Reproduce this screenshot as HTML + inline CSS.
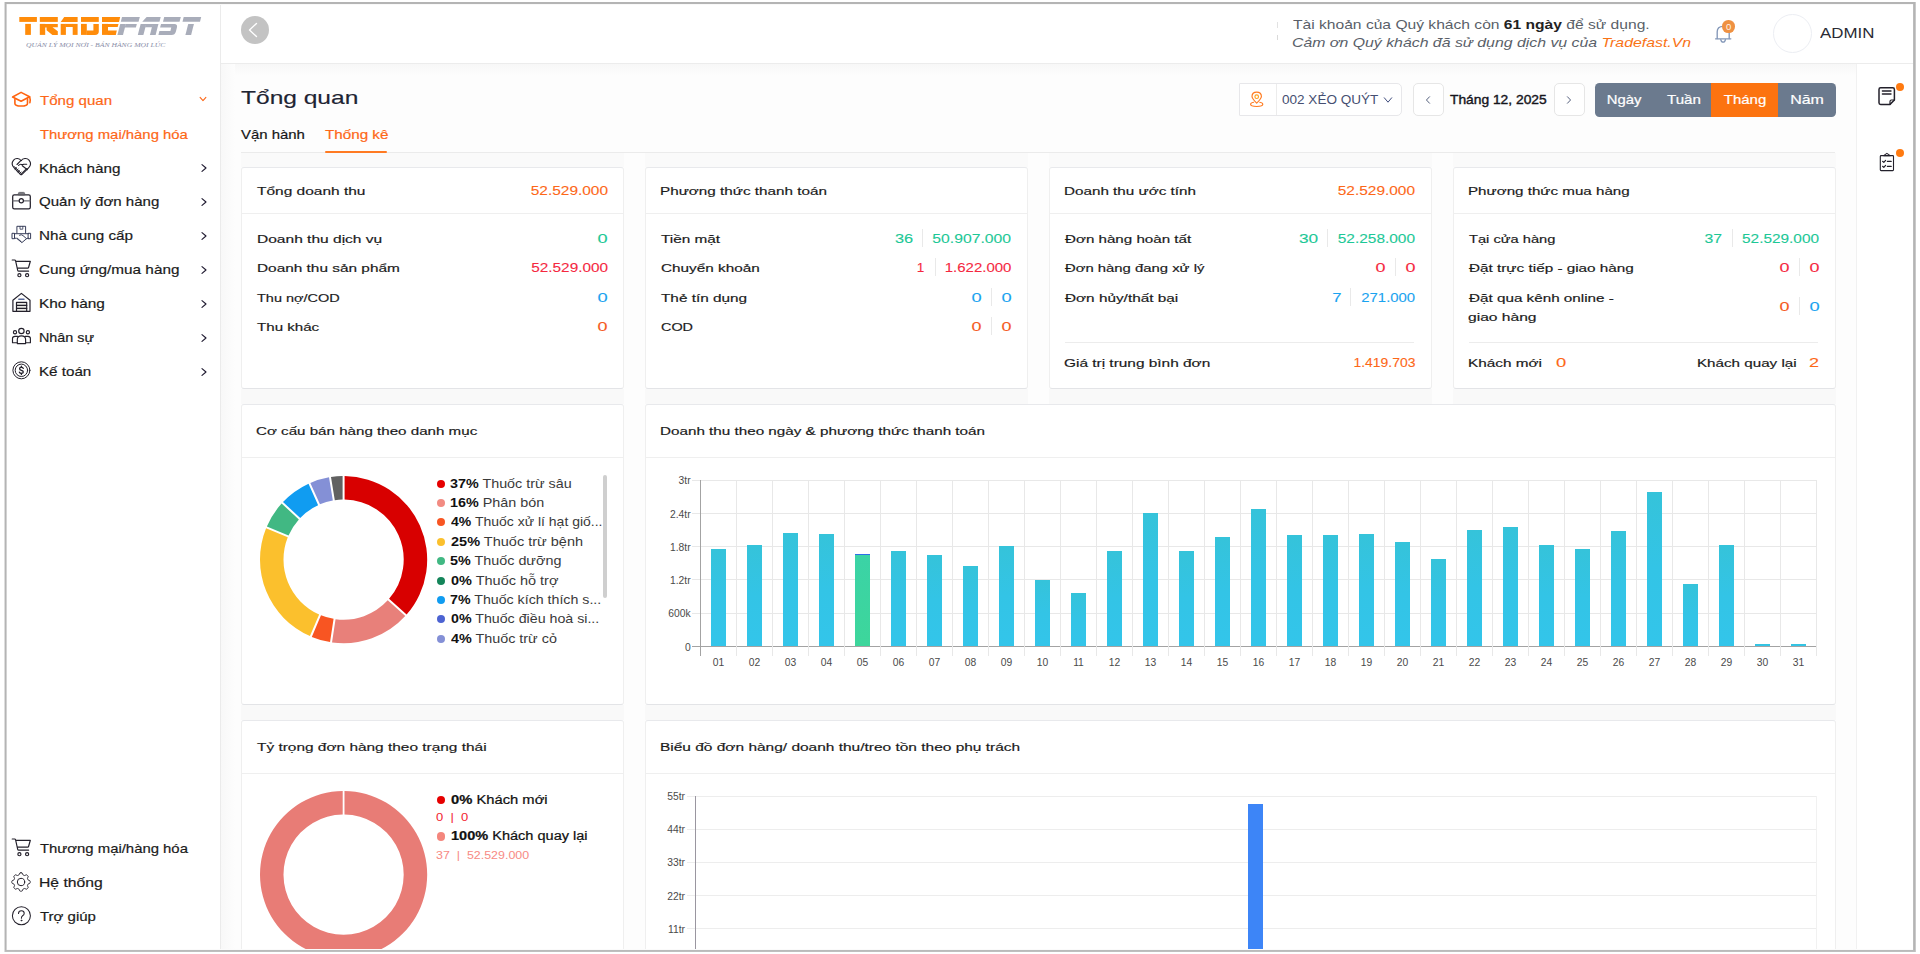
<!DOCTYPE html>
<html lang="vi"><head><meta charset="utf-8"><title>Tổng quan</title>
<style>
html,body{margin:0;padding:0;background:#fff;}
body{width:1920px;height:954px;overflow:hidden;position:relative;font-family:"Liberation Sans",sans-serif;}
#app{position:absolute;left:0;top:0;width:1920px;height:954px;overflow:hidden;background:#fff;}
#app b{font-weight:700}
.m{position:absolute;background:#fff}
</style></head><body><div id="app">

<div style="position:absolute;left:221px;top:64px;width:1635px;height:890px;background:#fdfdfd"></div>
<div style="position:absolute;left:221px;top:64px;width:1635px;height:12px;background:linear-gradient(#f7f7f7,#fdfdfd)"></div>
<div style="position:absolute;left:221px;top:64px;width:14px;height:890px;background:linear-gradient(90deg,#f8f8f8,#fdfdfd)"></div>
<div style="position:absolute;left:241px;top:153px;width:383px;height:14px;background:#fafafa"></div>
<div style="position:absolute;left:241px;top:389px;width:383px;height:15px;background:#f9f9f9"></div>
<div style="position:absolute;left:645px;top:153px;width:383px;height:14px;background:#fafafa"></div>
<div style="position:absolute;left:645px;top:389px;width:383px;height:15px;background:#f9f9f9"></div>
<div style="position:absolute;left:1049px;top:153px;width:383px;height:14px;background:#fafafa"></div>
<div style="position:absolute;left:1049px;top:389px;width:383px;height:15px;background:#f9f9f9"></div>
<div style="position:absolute;left:1453px;top:153px;width:383px;height:14px;background:#fafafa"></div>
<div style="position:absolute;left:1453px;top:389px;width:383px;height:15px;background:#f9f9f9"></div>
<div style="position:absolute;left:241px;top:705px;width:383px;height:15px;background:#f9f9f9"></div>
<div style="position:absolute;left:645px;top:705px;width:1191px;height:15px;background:#f9f9f9"></div>
<div style="position:absolute;left:221px;top:63px;width:1692px;height:1px;background:#ececec"></div>
<div style="position:absolute;left:220px;top:4px;width:1px;height:946px;background:#ebebeb"></div>
<div style="position:absolute;left:1856px;top:64px;width:57px;height:886px;background:#fff"></div>
<div style="position:absolute;left:1856px;top:64px;width:1px;height:886px;background:#f1f1f1"></div>
<svg style="position:absolute;left:0;top:0" width="220" height="60" viewBox="0 0 220 60">
<g fill="#ff8c0a">
 <rect x="19.3" y="17" width="17.6" height="4.9"/><rect x="25.2" y="23.9" width="5.7" height="11"/>
 <rect x="39.8" y="17" width="18" height="4.9"/><rect x="39.8" y="23.9" width="5.4" height="11"/>
 <path d="M45 23.9H57.8V27.2H52.5L57.8 31.2V34.9H52.4L46.6 30.2V27.4H45Z"/>
 <path d="M64.2 17H77.6V21.9H60.7Z"/><rect x="60.7" y="23.9" width="5.2" height="11"/><rect x="72.7" y="23.9" width="4.9" height="11"/><rect x="65.5" y="23.9" width="7.5" height="3.1"/>
 <rect x="81" y="17" width="17.8" height="4.9"/><rect x="81" y="23.9" width="5.8" height="11"/>
 <path d="M93.4 23.9H98.8V31.5Q98.8 34.9 95 34.9H86.5V30.4H93.4Z"/>
 <path d="M102 17H120.2L119 21.9H102Z"/><rect x="102" y="23.9" width="6" height="11"/>
 <path d="M107.8 23.9H118.5L117.7 27H107.8Z"/><path d="M107.8 30.6H116.8L115.8 34.9H107.8Z"/>
</g>
<g fill="#a9adba" transform="translate(0,34.9) skewX(-14.4) translate(0,-34.9)">
 <rect x="117.4" y="17" width="17.8" height="4.7"/><rect x="117.4" y="23.9" width="5.6" height="11"/><rect x="122.8" y="23.9" width="11.2" height="3.6"/>
 <path d="M142 17H156.1V21.7H138.9Z"/><rect x="137.8" y="23.9" width="5.6" height="11"/><rect x="149.9" y="23.9" width="5.7" height="11"/><rect x="143" y="23.9" width="7.4" height="3.4"/>
 <rect x="159.6" y="17" width="16.6" height="4.7"/>
 <path d="M158.2 23.9H171.5Q175 23.9 175 27.4V31.4Q175 34.9 171.5 34.9H158.4V31H169.4V27.6H158.2Z"/>
 <rect x="179.1" y="17" width="17.5" height="4.7"/><rect x="185.4" y="23.9" width="5.7" height="11"/>
</g>
</svg>
<svg style="position:absolute;left:195.4px;top:91.3px" width="16" height="16" viewBox="-8 -8 16 16"><path d="M-2.90 -1.70L0.00 1.70L2.90 -1.70" fill="none" stroke="#fd6717" stroke-width="1.05" stroke-linecap="round" stroke-linejoin="round"/></svg>
<svg style="position:absolute;left:195.65px;top:160.39999999999998px" width="16" height="16" viewBox="-8 -8 16 16"><path d="M-2.00 -3.40L2.00 0.00L-2.00 3.40" fill="none" stroke="#1f1a30" stroke-width="1.15" stroke-linecap="round" stroke-linejoin="round"/></svg>
<svg style="position:absolute;left:195.65px;top:194.29999999999998px" width="16" height="16" viewBox="-8 -8 16 16"><path d="M-2.00 -3.40L2.00 0.00L-2.00 3.40" fill="none" stroke="#1f1a30" stroke-width="1.15" stroke-linecap="round" stroke-linejoin="round"/></svg>
<svg style="position:absolute;left:195.65px;top:228.2px" width="16" height="16" viewBox="-8 -8 16 16"><path d="M-2.00 -3.40L2.00 0.00L-2.00 3.40" fill="none" stroke="#1f1a30" stroke-width="1.15" stroke-linecap="round" stroke-linejoin="round"/></svg>
<svg style="position:absolute;left:195.65px;top:262.09999999999997px" width="16" height="16" viewBox="-8 -8 16 16"><path d="M-2.00 -3.40L2.00 0.00L-2.00 3.40" fill="none" stroke="#1f1a30" stroke-width="1.15" stroke-linecap="round" stroke-linejoin="round"/></svg>
<svg style="position:absolute;left:195.65px;top:296.0px" width="16" height="16" viewBox="-8 -8 16 16"><path d="M-2.00 -3.40L2.00 0.00L-2.00 3.40" fill="none" stroke="#1f1a30" stroke-width="1.15" stroke-linecap="round" stroke-linejoin="round"/></svg>
<svg style="position:absolute;left:195.65px;top:329.9px" width="16" height="16" viewBox="-8 -8 16 16"><path d="M-2.00 -3.40L2.00 0.00L-2.00 3.40" fill="none" stroke="#1f1a30" stroke-width="1.15" stroke-linecap="round" stroke-linejoin="round"/></svg>
<svg style="position:absolute;left:195.65px;top:363.8px" width="16" height="16" viewBox="-8 -8 16 16"><path d="M-2.00 -3.40L2.00 0.00L-2.00 3.40" fill="none" stroke="#1f1a30" stroke-width="1.15" stroke-linecap="round" stroke-linejoin="round"/></svg>
<div style="position:absolute;left:240.7px;top:15.8px;width:28.2px;height:28.2px;border-radius:50%;background:#c3c3c3"></div>
<svg style="position:absolute;left:245.3px;top:21.8px" width="16" height="16" viewBox="-8 -8 16 16"><path d="M3.50 -6.60L-3.50 0.00L3.50 6.60" fill="none" stroke="#fff" stroke-width="1.35" stroke-linecap="round" stroke-linejoin="round"/></svg>
<div style="position:absolute;left:1277px;top:22px;width:1px;height:6px;background:#e2e2e2"></div>
<div style="position:absolute;left:1277px;top:35px;width:1px;height:5px;background:#dadada"></div>
<div style="position:absolute;left:1772.8px;top:13.5px;width:39.3px;height:39.3px;border-radius:50%;background:#fff;border:1.3px solid #eceef3;box-sizing:border-box"></div>
<div style="position:absolute;left:241px;top:152px;width:1594px;height:1px;background:#ebebeb"></div>
<div style="position:absolute;left:325px;top:151.3px;width:62.3px;height:1.7px;background:#ff7a22;border-radius:1px"></div>
<div style="position:absolute;left:1239px;top:83px;width:162.5px;height:33.4px;border:1px solid #e7e7ea;border-radius:1px 5px 5px 1px;background:#fff;box-sizing:border-box"></div>
<div style="position:absolute;left:1276px;top:84px;width:1px;height:31px;background:#ececec"></div>
<svg style="position:absolute;left:1380.3px;top:92.0px" width="16" height="16" viewBox="-8 -8 16 16"><path d="M-3.70 -2.20L0.00 2.20L3.70 -2.20" fill="none" stroke="#3f4c7d" stroke-width="1.0" stroke-linecap="round" stroke-linejoin="round"/></svg>
<div style="position:absolute;left:1412.5px;top:83px;width:31px;height:33px;border:1px solid #e6e6e6;border-radius:5px;background:#fff;box-sizing:border-box"></div>
<div style="position:absolute;left:1554px;top:83px;width:30.6px;height:33px;border:1px solid #e6e6e6;border-radius:5px;background:#fff;box-sizing:border-box"></div>
<svg style="position:absolute;left:1420px;top:91.8px" width="16" height="16" viewBox="-8 -8 16 16"><path d="M1.55 -3.25L-1.55 0.00L1.55 3.25" fill="none" stroke="#4b5675" stroke-width="0.95" stroke-linecap="round" stroke-linejoin="round"/></svg>
<svg style="position:absolute;left:1561.4px;top:91.8px" width="16" height="16" viewBox="-8 -8 16 16"><path d="M-1.55 -3.25L1.55 0.00L-1.55 3.25" fill="none" stroke="#4b5675" stroke-width="0.95" stroke-linecap="round" stroke-linejoin="round"/></svg>
<div style="position:absolute;left:1595.2px;top:83px;width:240.5px;height:33.7px;border-radius:4.5px;background:#6b7a8e;overflow:hidden"><div style="position:absolute;left:115.8px;top:0;width:67px;height:34px;background:#fc7310"></div></div>
<div style="position:absolute;left:241px;top:167px;width:383px;height:222px;background:#fff;border:1px solid #efefef;border-top-color:#e8e9ec;border-bottom-color:#e3e4e7;border-radius:3px;box-sizing:border-box"></div>
<div style="position:absolute;left:242px;top:213px;width:381px;height:1px;background:#efefef"></div>
<div style="position:absolute;left:645px;top:167px;width:383px;height:222px;background:#fff;border:1px solid #efefef;border-top-color:#e8e9ec;border-bottom-color:#e3e4e7;border-radius:3px;box-sizing:border-box"></div>
<div style="position:absolute;left:646px;top:213px;width:381px;height:1px;background:#efefef"></div>
<div style="position:absolute;left:1049px;top:167px;width:383px;height:222px;background:#fff;border:1px solid #efefef;border-top-color:#e8e9ec;border-bottom-color:#e3e4e7;border-radius:3px;box-sizing:border-box"></div>
<div style="position:absolute;left:1050px;top:213px;width:381px;height:1px;background:#efefef"></div>
<div style="position:absolute;left:1453px;top:167px;width:383px;height:222px;background:#fff;border:1px solid #efefef;border-top-color:#e8e9ec;border-bottom-color:#e3e4e7;border-radius:3px;box-sizing:border-box"></div>
<div style="position:absolute;left:1454px;top:213px;width:381px;height:1px;background:#efefef"></div>
<div style="position:absolute;left:922.3px;top:229.0px;width:1px;height:18px;background:#e9e9e9"></div>
<div style="position:absolute;left:935.0px;top:258.1px;width:1px;height:18px;background:#e9e9e9"></div>
<div style="position:absolute;left:991.1px;top:287.9px;width:1px;height:18px;background:#e9e9e9"></div>
<div style="position:absolute;left:991.1px;top:317.1px;width:1px;height:18px;background:#e9e9e9"></div>
<div style="position:absolute;left:1327.3px;top:229.0px;width:1px;height:18px;background:#e9e9e9"></div>
<div style="position:absolute;left:1394.8px;top:258.1px;width:1px;height:18px;background:#e9e9e9"></div>
<div style="position:absolute;left:1350.0px;top:287.9px;width:1px;height:18px;background:#e9e9e9"></div>
<div style="position:absolute;left:1065.3px;top:342px;width:349px;height:1px;background:#ececec"></div>
<div style="position:absolute;left:1731.9px;top:229.0px;width:1px;height:18px;background:#e9e9e9"></div>
<div style="position:absolute;left:1798.5px;top:258.1px;width:1px;height:18px;background:#e9e9e9"></div>
<div style="position:absolute;left:1798.5px;top:296.8px;width:1px;height:18px;background:#e9e9e9"></div>
<div style="position:absolute;left:1469.1px;top:342px;width:349.4px;height:1px;background:#ececec"></div>
<div style="position:absolute;left:241px;top:404px;width:383px;height:301px;background:#fff;border:1px solid #efefef;border-top-color:#e8e9ec;border-bottom-color:#e3e4e7;border-radius:3px;box-sizing:border-box"></div>
<div style="position:absolute;left:242px;top:457px;width:381px;height:1px;background:#efefef"></div>
<div style="position:absolute;left:645px;top:404px;width:1191px;height:301px;background:#fff;border:1px solid #efefef;border-top-color:#e8e9ec;border-bottom-color:#e3e4e7;border-radius:3px;box-sizing:border-box"></div>
<div style="position:absolute;left:646px;top:457px;width:1189px;height:1px;background:#efefef"></div>
<div style="position:absolute;left:241px;top:720px;width:383px;height:260px;background:#fff;border:1px solid #efefef;border-top-color:#e8e9ec;border-bottom-color:#e3e4e7;border-radius:3px;box-sizing:border-box"></div>
<div style="position:absolute;left:242px;top:773px;width:381px;height:1px;background:#efefef"></div>
<div style="position:absolute;left:645px;top:720px;width:1191px;height:260px;background:#fff;border:1px solid #efefef;border-top-color:#e8e9ec;border-bottom-color:#e3e4e7;border-radius:3px;box-sizing:border-box"></div>
<div style="position:absolute;left:646px;top:773px;width:1189px;height:1px;background:#efefef"></div>
<svg style="position:absolute;left:257.79999999999995px;top:473.5px" width="171.2" height="171.2" viewBox="257.79999999999995 473.5 171.2 171.2"><path d="M344.40 475.51A83.6 83.6 0 0 1 406.42 614.03L388.89 598.38A60.1 60.1 0 0 0 344.40 499.01Z" fill="#d80000"/><path d="M405.09 615.52A83.6 83.6 0 0 1 331.83 641.90L335.36 618.66A60.1 60.1 0 0 0 387.56 599.87Z" fill="#e8807a"/><path d="M329.85 641.60A83.6 83.6 0 0 1 311.60 636.42L320.80 614.79A60.1 60.1 0 0 0 333.38 618.36Z" fill="#f85522"/><path d="M309.76 635.63A83.6 83.6 0 0 1 265.88 527.79L287.57 536.85A60.1 60.1 0 0 0 318.96 614.01Z" fill="#fbc02d"/><path d="M266.66 525.94A83.6 83.6 0 0 1 281.42 502.99L298.66 518.97A60.1 60.1 0 0 0 288.34 535.01Z" fill="#41b883"/><path d="M282.78 501.53A83.6 83.6 0 0 1 308.33 483.21L317.93 504.66A60.1 60.1 0 0 0 300.02 517.51Z" fill="#109cf1"/><path d="M310.15 482.40A83.6 83.6 0 0 1 328.82 476.78L332.64 499.97A60.1 60.1 0 0 0 319.76 503.85Z" fill="#8490d6"/><path d="M330.79 476.46A83.6 83.6 0 0 1 342.40 475.51L342.40 499.01A60.1 60.1 0 0 0 334.61 499.65Z" fill="#616161"/></svg>
<svg style="position:absolute;left:257.79999999999995px;top:789.4px" width="171.2" height="171.2" viewBox="257.79999999999995 789.4 171.2 171.2"><path d="M344.30 791.40A83.6 83.6 0 1 1 342.50 791.40L342.50 814.91A60.1 60.1 0 1 0 344.30 814.91Z" fill="#e87c76"/></svg>
<div style="position:absolute;left:436.7px;top:479.5px;width:8px;height:8px;border-radius:50%;background:#e60000"></div>
<div style="position:absolute;left:436.7px;top:498.90000000000003px;width:8px;height:8px;border-radius:50%;background:#f28b82"></div>
<div style="position:absolute;left:436.7px;top:518.3px;width:8px;height:8px;border-radius:50%;background:#f85522"></div>
<div style="position:absolute;left:436.7px;top:537.6999999999999px;width:8px;height:8px;border-radius:50%;background:#fbc02d"></div>
<div style="position:absolute;left:436.7px;top:557.0999999999999px;width:8px;height:8px;border-radius:50%;background:#41b883"></div>
<div style="position:absolute;left:436.7px;top:576.5px;width:8px;height:8px;border-radius:50%;background:#14855a"></div>
<div style="position:absolute;left:436.7px;top:595.9px;width:8px;height:8px;border-radius:50%;background:#109cf1"></div>
<div style="position:absolute;left:436.7px;top:615.3px;width:8px;height:8px;border-radius:50%;background:#4c63d2"></div>
<div style="position:absolute;left:436.7px;top:634.6999999999999px;width:8px;height:8px;border-radius:50%;background:#8490d6"></div>
<div style="position:absolute;left:603.2px;top:474.5px;width:4.3px;height:123.5px;background:#cfcfcf;border-radius:2px"></div>
<div style="position:absolute;left:437.0px;top:795.5px;width:8.2px;height:8.2px;border-radius:50%;background:#e60000"></div>
<div style="position:absolute;left:437.0px;top:832.4px;width:8.2px;height:8.2px;border-radius:50%;background:#f4867d"></div>
<svg style="position:absolute;left:0;top:0;overflow:visible" width="1920" height="954" viewBox="0 0 1920 954" shape-rendering="crispEdges"><rect x="691.5" y="645.80" width="1125.0" height="1" fill="#a3a3a3"/><rect x="691.5" y="612.56" width="1125.0" height="1" fill="#e8e8e8"/><rect x="691.5" y="579.32" width="1125.0" height="1" fill="#e8e8e8"/><rect x="691.5" y="546.08" width="1125.0" height="1" fill="#e8e8e8"/><rect x="691.5" y="512.84" width="1125.0" height="1" fill="#e8e8e8"/><rect x="691.5" y="479.60" width="1125.0" height="1" fill="#e8e8e8"/><rect x="700.00" y="480.1" width="1" height="176.2" fill="#a3a3a3"/><rect x="736.00" y="480.1" width="1" height="176.2" fill="#e8e8e8"/><rect x="772.00" y="480.1" width="1" height="176.2" fill="#e8e8e8"/><rect x="808.00" y="480.1" width="1" height="176.2" fill="#e8e8e8"/><rect x="844.00" y="480.1" width="1" height="176.2" fill="#e8e8e8"/><rect x="880.00" y="480.1" width="1" height="176.2" fill="#e8e8e8"/><rect x="916.00" y="480.1" width="1" height="176.2" fill="#e8e8e8"/><rect x="952.00" y="480.1" width="1" height="176.2" fill="#e8e8e8"/><rect x="988.00" y="480.1" width="1" height="176.2" fill="#e8e8e8"/><rect x="1024.00" y="480.1" width="1" height="176.2" fill="#e8e8e8"/><rect x="1060.00" y="480.1" width="1" height="176.2" fill="#e8e8e8"/><rect x="1096.00" y="480.1" width="1" height="176.2" fill="#e8e8e8"/><rect x="1132.00" y="480.1" width="1" height="176.2" fill="#e8e8e8"/><rect x="1168.00" y="480.1" width="1" height="176.2" fill="#e8e8e8"/><rect x="1204.00" y="480.1" width="1" height="176.2" fill="#e8e8e8"/><rect x="1240.00" y="480.1" width="1" height="176.2" fill="#e8e8e8"/><rect x="1276.00" y="480.1" width="1" height="176.2" fill="#e8e8e8"/><rect x="1312.00" y="480.1" width="1" height="176.2" fill="#e8e8e8"/><rect x="1348.00" y="480.1" width="1" height="176.2" fill="#e8e8e8"/><rect x="1384.00" y="480.1" width="1" height="176.2" fill="#e8e8e8"/><rect x="1420.00" y="480.1" width="1" height="176.2" fill="#e8e8e8"/><rect x="1456.00" y="480.1" width="1" height="176.2" fill="#e8e8e8"/><rect x="1492.00" y="480.1" width="1" height="176.2" fill="#e8e8e8"/><rect x="1528.00" y="480.1" width="1" height="176.2" fill="#e8e8e8"/><rect x="1564.00" y="480.1" width="1" height="176.2" fill="#e8e8e8"/><rect x="1600.00" y="480.1" width="1" height="176.2" fill="#e8e8e8"/><rect x="1636.00" y="480.1" width="1" height="176.2" fill="#e8e8e8"/><rect x="1672.00" y="480.1" width="1" height="176.2" fill="#e8e8e8"/><rect x="1708.00" y="480.1" width="1" height="176.2" fill="#e8e8e8"/><rect x="1744.00" y="480.1" width="1" height="176.2" fill="#e8e8e8"/><rect x="1780.00" y="480.1" width="1" height="176.2" fill="#e8e8e8"/><rect x="1816.00" y="480.1" width="1" height="176.2" fill="#e8e8e8"/></svg>
<div style="position:absolute;left:711.05px;top:549.0px;width:14.9px;height:96.8px;background:linear-gradient(#35c3da,#33c4e6 50%,#33c5ea)"></div>
<div style="position:absolute;left:747.05px;top:544.5999999999999px;width:14.9px;height:101.2px;background:linear-gradient(#35c3da,#33c4e6 50%,#33c5ea)"></div>
<div style="position:absolute;left:783.05px;top:532.6999999999999px;width:14.9px;height:113.1px;background:linear-gradient(#35c3da,#33c4e6 50%,#33c5ea)"></div>
<div style="position:absolute;left:819.05px;top:534.4px;width:14.9px;height:111.4px;background:linear-gradient(#35c3da,#33c4e6 50%,#33c5ea)"></div>
<div style="position:absolute;left:855.05px;top:554.9px;width:14.9px;height:90.9px;background:linear-gradient(#3bd3a6,#3dd69b)"></div>
<div style="position:absolute;left:855.05px;top:554.3px;width:14.9px;height:1.2px;background:#2f6fe8"></div>
<div style="position:absolute;left:891.05px;top:551.4px;width:14.9px;height:94.4px;background:linear-gradient(#35c3da,#33c4e6 50%,#33c5ea)"></div>
<div style="position:absolute;left:927.05px;top:554.5px;width:14.9px;height:91.3px;background:linear-gradient(#35c3da,#33c4e6 50%,#33c5ea)"></div>
<div style="position:absolute;left:963.05px;top:565.8px;width:14.9px;height:80.0px;background:linear-gradient(#35c3da,#33c4e6 50%,#33c5ea)"></div>
<div style="position:absolute;left:999.05px;top:545.9px;width:14.9px;height:99.9px;background:linear-gradient(#35c3da,#33c4e6 50%,#33c5ea)"></div>
<div style="position:absolute;left:1035.05px;top:579.9px;width:14.9px;height:65.9px;background:linear-gradient(#35c3da,#33c4e6 50%,#33c5ea)"></div>
<div style="position:absolute;left:1071.05px;top:593.3px;width:14.9px;height:52.5px;background:linear-gradient(#35c3da,#33c4e6 50%,#33c5ea)"></div>
<div style="position:absolute;left:1107.05px;top:550.9px;width:14.9px;height:94.9px;background:linear-gradient(#35c3da,#33c4e6 50%,#33c5ea)"></div>
<div style="position:absolute;left:1143.05px;top:512.8px;width:14.9px;height:133.0px;background:linear-gradient(#35c3da,#33c4e6 50%,#33c5ea)"></div>
<div style="position:absolute;left:1179.05px;top:551.4px;width:14.9px;height:94.4px;background:linear-gradient(#35c3da,#33c4e6 50%,#33c5ea)"></div>
<div style="position:absolute;left:1215.05px;top:536.5px;width:14.9px;height:109.3px;background:linear-gradient(#35c3da,#33c4e6 50%,#33c5ea)"></div>
<div style="position:absolute;left:1251.05px;top:508.79999999999995px;width:14.9px;height:137.0px;background:linear-gradient(#35c3da,#33c4e6 50%,#33c5ea)"></div>
<div style="position:absolute;left:1287.05px;top:535.0px;width:14.9px;height:110.8px;background:linear-gradient(#35c3da,#33c4e6 50%,#33c5ea)"></div>
<div style="position:absolute;left:1323.05px;top:535.0px;width:14.9px;height:110.8px;background:linear-gradient(#35c3da,#33c4e6 50%,#33c5ea)"></div>
<div style="position:absolute;left:1359.05px;top:533.6999999999999px;width:14.9px;height:112.1px;background:linear-gradient(#35c3da,#33c4e6 50%,#33c5ea)"></div>
<div style="position:absolute;left:1395.05px;top:541.6999999999999px;width:14.9px;height:104.1px;background:linear-gradient(#35c3da,#33c4e6 50%,#33c5ea)"></div>
<div style="position:absolute;left:1431.05px;top:558.5px;width:14.9px;height:87.3px;background:linear-gradient(#35c3da,#33c4e6 50%,#33c5ea)"></div>
<div style="position:absolute;left:1467.05px;top:529.8px;width:14.9px;height:116.0px;background:linear-gradient(#35c3da,#33c4e6 50%,#33c5ea)"></div>
<div style="position:absolute;left:1503.05px;top:526.8px;width:14.9px;height:119.0px;background:linear-gradient(#35c3da,#33c4e6 50%,#33c5ea)"></div>
<div style="position:absolute;left:1539.05px;top:544.9px;width:14.9px;height:100.9px;background:linear-gradient(#35c3da,#33c4e6 50%,#33c5ea)"></div>
<div style="position:absolute;left:1575.05px;top:549.3px;width:14.9px;height:96.5px;background:linear-gradient(#35c3da,#33c4e6 50%,#33c5ea)"></div>
<div style="position:absolute;left:1611.05px;top:531.1999999999999px;width:14.9px;height:114.6px;background:linear-gradient(#35c3da,#33c4e6 50%,#33c5ea)"></div>
<div style="position:absolute;left:1647.05px;top:491.79999999999995px;width:14.9px;height:154.0px;background:linear-gradient(#35c3da,#33c4e6 50%,#33c5ea)"></div>
<div style="position:absolute;left:1683.05px;top:584.3px;width:14.9px;height:61.5px;background:linear-gradient(#35c3da,#33c4e6 50%,#33c5ea)"></div>
<div style="position:absolute;left:1719.05px;top:544.5999999999999px;width:14.9px;height:101.2px;background:linear-gradient(#35c3da,#33c4e6 50%,#33c5ea)"></div>
<div style="position:absolute;left:1755.05px;top:644.0px;width:14.9px;height:1.7999999999999998px;background:linear-gradient(#35c3da,#33c4e6 50%,#33c5ea)"></div>
<div style="position:absolute;left:1791.05px;top:644.0px;width:14.9px;height:1.7999999999999998px;background:linear-gradient(#35c3da,#33c4e6 50%,#33c5ea)"></div>
<svg style="position:absolute;left:0;top:0;overflow:visible" width="1920" height="954" viewBox="0 0 1920 954" shape-rendering="crispEdges"><rect x="686.8" y="795.60" width="1129.6" height="1" fill="#ededed"/><rect x="686.8" y="828.70" width="1129.6" height="1" fill="#ededed"/><rect x="686.8" y="861.80" width="1129.6" height="1" fill="#ededed"/><rect x="686.8" y="894.90" width="1129.6" height="1" fill="#ededed"/><rect x="686.8" y="928.00" width="1129.6" height="1" fill="#ededed"/><rect x="694.90" y="796" width="1" height="160" fill="#9a96a0"/><rect x="1815.90" y="796" width="1" height="160" fill="#f1f1f1"/></svg>
<div style="position:absolute;left:1248.2px;top:803.8px;width:14.8px;height:160px;background:#3d85f7"></div>
<svg style="position:absolute;left:10px;top:88px;overflow:visible" width="24" height="22" viewBox="10 88 24 22" fill="none" stroke-linecap="round" stroke-linejoin="round" ><g stroke="#ff6410" stroke-width="1.6">
<path d="M12.6 97L21.1 92.4L29.6 96.8L21.1 101.3Z"/>
<path d="M14.9 99.3V103.4Q14.9 106 21.1 106Q27.5 106 27.5 103.4V98.9"/>
<path d="M29.6 96.8Q30.6 99.5 29.9 102.6"/></g></svg>
<svg style="position:absolute;left:10px;top:156px;overflow:visible" width="24" height="22" viewBox="10 156 24 22" fill="none" stroke-linecap="round" stroke-linejoin="round" ><g stroke="#23202b" stroke-width="1.1">
<path d="M21.1 160.7C19.5 158.1 15.6 157.7 13.6 160.1C11.6 162.5 12 165.6 14.2 167.8L20.4 174.3Q21.2 175.1 22 174.3L28.6 167.8C30.8 165.6 31 162.5 29 160.1C27 157.7 22.7 158.1 21.1 160.7Z"/>
<path d="M20.5 160.9L17 164.5"/>
<path d="M18.6 165.5Q20 163.7 21.5 164.4Q22.7 165 23.7 164.3H26.7"/>
<path d="M22.3 165.7L27.4 169.7"/>
<path d="M14.4 166.6L21.4 173.6" stroke-width="1.0"/>
<path d="M15 169.2L16.6 167.7M16.5 170.7L18.1 169.2M18 172.2L19.6 170.7M19.5 173.6L21.1 172.1" stroke-width="0.95"/>
<path d="M22.6 172.9L24 171.5M24.2 171.3L25.6 169.9M25.8 169.7L27.2 168.3" stroke-width="0.9"/>
<path d="M21.6 173.3L26.2 168.6" stroke-width="0.8"/>
</g></svg>
<svg style="position:absolute;left:10px;top:190px;overflow:visible" width="24" height="22" viewBox="10 190 24 22" fill="none" stroke-linecap="round" stroke-linejoin="round" ><g stroke="#23202b" stroke-width="1.25">
<rect x="12.7" y="194.9" width="17.6" height="14" rx="1.6"/>
<path d="M18.4 194.6V193.4Q18.4 192.4 19.4 192.4H23.6Q24.6 192.4 24.6 193.4V194.6Z" fill="#7a7a80" stroke="#55555c" stroke-width="0.8"/>
<path d="M13 200.8H19M23.6 200.8H30" stroke="#6d6d74" stroke-width="1.3"/>
<circle cx="21.3" cy="200.8" r="2.1" stroke-width="1.2"/></g></svg>
<svg style="position:absolute;left:10px;top:224px;overflow:visible" width="24" height="22" viewBox="10 224 24 22" fill="none" stroke-linecap="round" stroke-linejoin="round" ><g stroke="#2c3350" stroke-width="0.95">
<path d="M16.9 233V226.3H25.6V233"/><path d="M20 226.5V229.2H22.8V226.5" stroke-width="0.8"/>
<rect x="12.4" y="233.3" width="2.1" height="5.4"/><rect x="28.5" y="233.3" width="2.1" height="5.4"/>
<path d="M14.6 233.7H28.4"/><path d="M14.6 238.2L16.6 238.3L21.9 242.6L27 238.3L28.4 238.2"/>
<path d="M19.5 235.2Q21.5 234 23 235.6L26.2 238.4"/><path d="M17.3 238.2L21.2 241.6" stroke-width="0.8"/></g></svg>
<svg style="position:absolute;left:10px;top:257.2px;overflow:visible" width="24" height="22" viewBox="10 257.2 24 22" fill="none" stroke-linecap="round" stroke-linejoin="round" ><g stroke="#23202b" stroke-width="1.15">
<path d="M12.2 260.2H14.6Q15.4 260.2 15.6 261.09999999999997L17.7 270.59999999999997Q17.9 271.4 18.7 271.4H28.6"/>
<path d="M16.3 261.5H30.3L28.6 267.59999999999997Q28.4 268.4 27.6 268.4H17.6" stroke-width="1.25"/>
<circle cx="19.4" cy="275.4" r="1.55" stroke-width="1.2"/><circle cx="27.1" cy="275.4" r="1.55" stroke-width="1.2"/></g></svg>
<svg style="position:absolute;left:10px;top:836.4px;overflow:visible" width="24" height="22" viewBox="10 836.4 24 22" fill="none" stroke-linecap="round" stroke-linejoin="round" ><g stroke="#23202b" stroke-width="1.15">
<path d="M12.2 839.4H14.6Q15.4 839.4 15.6 840.3L17.7 849.8Q17.9 850.6 18.7 850.6H28.6"/>
<path d="M16.3 840.6999999999999H30.3L28.6 846.8Q28.4 847.6 27.6 847.6H17.6" stroke-width="1.25"/>
<circle cx="19.4" cy="854.6" r="1.55" stroke-width="1.2"/><circle cx="27.1" cy="854.6" r="1.55" stroke-width="1.2"/></g></svg>
<svg style="position:absolute;left:10px;top:290px;overflow:visible" width="24" height="24" viewBox="10 290 24 24" fill="none" stroke-linecap="round" stroke-linejoin="round" ><g stroke="#23202b" stroke-width="1.2">
<path d="M12.9 311.3V300.2L21.4 293.4L30 300.2V311.3Z"/>
<rect x="16.5" y="302.4" width="10.2" height="8.9" fill="#e9e8e4"/>
<path d="M16.5 305.4H26.7M16.5 308.4H26.7"/>
<path d="M18.8 299.3H24" stroke="#5a6a9a" stroke-width="1.4"/></g></svg>
<svg style="position:absolute;left:10px;top:324px;overflow:visible" width="24" height="22" viewBox="10 324 24 22" fill="none" stroke-linecap="round" stroke-linejoin="round" ><g stroke="#23202b" stroke-width="1.15">
<circle cx="21.4" cy="331" r="2.7"/><circle cx="15" cy="332.2" r="1.6"/><circle cx="27.9" cy="332.2" r="1.6"/>
<path d="M17.3 343.6V339.6Q17.3 335.9 21.4 335.9Q25.6 335.9 25.6 339.6V343.6Z"/>
<path d="M17.2 342.7H12.5V338.6Q12.5 336.3 15 336.3H17.6"/>
<path d="M25.7 342.7H30.4V338.6Q30.4 336.3 27.9 336.3H25.3"/></g></svg>
<svg style="position:absolute;left:10px;top:359px;overflow:visible" width="24" height="22" viewBox="10 359 24 22" fill="none" stroke-linecap="round" stroke-linejoin="round" ><g stroke="#23202b" stroke-width="1.0">
<circle cx="21.4" cy="370.3" r="8.5"/><circle cx="21.4" cy="370.3" r="6.2"/>
<path d="M23.3 368.4Q22.8 367.2 21.4 367.2Q19.6 367.2 19.6 368.7Q19.6 369.9 21.4 370.3Q23.3 370.7 23.3 372Q23.3 373.4 21.4 373.4Q19.9 373.4 19.4 372.2" stroke-width="1.3"/>
<path d="M21.4 366.2V367.2M21.4 373.4V374.6" stroke-width="1.2"/></g></svg>
<svg style="position:absolute;left:9.399999999999999px;top:869.7px;overflow:visible" width="24" height="24" viewBox="9.399999999999999 869.7 24 24" fill="none" stroke-linecap="round" stroke-linejoin="round" ><g stroke="#23202b" stroke-width="1.0"><path d="M21.40 872.50L21.76 872.51L22.12 872.56L22.47 872.68L22.78 872.98L23.01 873.61L23.19 874.24L23.41 874.57L23.67 874.73L23.93 874.85L24.19 874.96L24.46 875.07L24.73 875.17L25.02 875.23L25.41 875.16L25.98 874.84L26.59 874.56L27.03 874.56L27.36 874.73L27.64 874.95L27.91 875.19L28.15 875.46L28.37 875.74L28.54 876.07L28.54 876.51L28.26 877.12L27.94 877.69L27.87 878.08L27.93 878.37L28.03 878.64L28.14 878.91L28.25 879.17L28.37 879.43L28.53 879.69L28.86 879.91L29.49 880.09L30.12 880.32L30.42 880.63L30.54 880.98L30.59 881.34L30.60 881.70L30.59 882.06L30.54 882.42L30.42 882.77L30.12 883.08L29.49 883.31L28.86 883.49L28.53 883.71L28.37 883.97L28.25 884.23L28.14 884.49L28.03 884.76L27.93 885.03L27.87 885.32L27.94 885.71L28.26 886.28L28.54 886.89L28.54 887.33L28.37 887.66L28.15 887.94L27.91 888.21L27.64 888.45L27.36 888.67L27.03 888.84L26.59 888.84L25.98 888.56L25.41 888.24L25.02 888.17L24.73 888.23L24.46 888.33L24.19 888.44L23.93 888.55L23.67 888.67L23.41 888.83L23.19 889.16L23.01 889.79L22.78 890.42L22.47 890.72L22.12 890.84L21.76 890.89L21.40 890.90L21.04 890.89L20.68 890.84L20.33 890.72L20.02 890.42L19.79 889.79L19.61 889.16L19.39 888.83L19.13 888.67L18.87 888.55L18.61 888.44L18.34 888.33L18.07 888.23L17.78 888.17L17.39 888.24L16.82 888.56L16.21 888.84L15.77 888.84L15.44 888.67L15.16 888.45L14.89 888.21L14.65 887.94L14.43 887.66L14.26 887.33L14.26 886.89L14.54 886.28L14.86 885.71L14.93 885.32L14.87 885.03L14.77 884.76L14.66 884.49L14.55 884.23L14.43 883.97L14.27 883.71L13.94 883.49L13.31 883.31L12.68 883.08L12.38 882.77L12.26 882.42L12.21 882.06L12.20 881.70L12.21 881.34L12.26 880.98L12.38 880.63L12.68 880.32L13.31 880.09L13.94 879.91L14.27 879.69L14.43 879.43L14.55 879.17L14.66 878.91L14.77 878.64L14.87 878.37L14.93 878.08L14.86 877.69L14.54 877.12L14.26 876.51L14.26 876.07L14.43 875.74L14.65 875.46L14.89 875.19L15.16 874.95L15.44 874.73L15.77 874.56L16.21 874.56L16.82 874.84L17.39 875.16L17.78 875.23L18.07 875.17L18.34 875.07L18.61 874.96L18.87 874.85L19.13 874.73L19.39 874.57L19.61 874.24L19.79 873.61L20.02 872.98L20.33 872.68L20.68 872.56L21.04 872.51L21.40 872.50Z"/><circle cx="21.4" cy="881.7" r="3.7"/></g></svg>
<svg style="position:absolute;left:10px;top:904px;overflow:visible" width="24" height="24" viewBox="10 904 24 24" fill="none" stroke-linecap="round" stroke-linejoin="round" ><g stroke="#23202b" stroke-width="1.05"><circle cx="21.4" cy="915.7" r="9.0"/>
<path d="M18.5 913.4Q18.6 910.8 21.4 910.8Q24.2 910.8 24.2 913.2Q24.2 914.8 22.6 915.8Q21.4 916.6 21.4 918.2"/>
<circle cx="21.4" cy="920.5" r="0.6" fill="#23202b" stroke-width="0.5"/></g></svg>
<svg style="position:absolute;left:1710px;top:20px;overflow:visible" width="26" height="26" viewBox="1710 20 26 26" fill="none" stroke-linecap="round" stroke-linejoin="round" ><g stroke="#8397b8" stroke-width="1.35">
<path d="M1717.2 38.6V31.8Q1717.2 26.3 1723.2 26.3Q1729.2 26.3 1729.2 31.8V38.6"/>
<path d="M1715.6 38.8H1730.8"/><path d="M1720.8 39.6Q1721.2 42.1 1723.1 42.1Q1725 42.1 1725.4 39.6"/></g></svg>
<div style="position:absolute;left:1722.3px;top:20px;width:12.6px;height:12.6px;border-radius:50%;background:#ef9142"></div>
<svg style="position:absolute;left:1246px;top:88px;overflow:visible" width="22" height="22" viewBox="1246 88 22 22" fill="none" stroke-linecap="round" stroke-linejoin="round" ><g stroke="#ff7a1f" stroke-width="1.15">
<path d="M1256.7 103.2Q1252 98.6 1252 96.6Q1252 92.1 1256.7 92.1Q1261.4 92.1 1261.4 96.6Q1261.4 98.6 1256.7 103.2Z"/>
<circle cx="1256.7" cy="96.7" r="1.8" stroke="#ffa01f"/>
<path d="M1253.6 102.3Q1250.6 102.9 1250.6 104.3Q1250.6 106.5 1256.7 106.5Q1262.8 106.5 1262.8 104.3Q1262.8 102.9 1259.8 102.3"/></g></svg>
<svg style="position:absolute;left:1874px;top:84px;overflow:visible" width="26" height="24" viewBox="1874 84 26 24" fill="none" stroke-linecap="round" stroke-linejoin="round" ><g stroke="#23202b" stroke-width="1.5">
<path d="M1890 104.4H1880.6Q1879 104.4 1879 102.8V89.4Q1879 87.8 1880.6 87.8H1892.8Q1894.4 87.8 1894.4 89.4V100Z"/>
<path d="M1894.4 100H1891.4Q1890 100 1890 101.4V104.4" stroke-width="1.2"/>
<path d="M1882.4 91H1891M1882.4 94H1891" stroke-width="1.4"/></g></svg>
<div style="position:absolute;left:1895.6px;top:83px;width:8px;height:8px;border-radius:50%;background:#ff7a10"></div>
<svg style="position:absolute;left:1874px;top:150px;overflow:visible" width="26" height="24" viewBox="1874 150 26 24" fill="none" stroke-linecap="round" stroke-linejoin="round" ><g stroke="#23202b" stroke-width="1.1">
<rect x="1880.3" y="155.6" width="13.2" height="15" rx="0.8"/>
<path d="M1883.6 155.6L1886.9 153.4L1890.2 155.6Z" fill="#fff"/>
<path d="M1882.6 161.3L1883.8 162.4L1885.6 160.4M1887.4 161.4H1891.2M1882.6 166.3L1883.8 167.4L1885.6 165.4M1887.4 166.4H1891.2" stroke-width="1.2"/></g></svg>
<div style="position:absolute;left:1895.6px;top:148.8px;width:8px;height:8px;border-radius:50%;background:#ff7a10"></div>
<div id="t0" style="position:absolute;top:39px;line-height:11px;font-size:6.2px;color:#8a8ea8;white-space:nowrap;font-family:'Liberation Serif', serif;font-style:italic;left:25.52px;transform:scaleX(1.2360);transform-origin:left center"><span>QUẢN LÝ MỌI NƠI - BÁN HÀNG MỌI LÚC</span></div>
<div id="t1" style="position:absolute;top:91px;line-height:20px;font-size:12.1px;color:#fd6717;white-space:nowrap;font-family:'Liberation Sans', sans-serif;-webkit-text-stroke:0.18px #fd6717;left:39.52px;transform:scaleX(1.2455);transform-origin:left center"><span>Tổng quan</span></div>
<div id="t2" style="position:absolute;top:125px;line-height:20px;font-size:12.1px;color:#fd6717;white-space:nowrap;font-family:'Liberation Sans', sans-serif;-webkit-text-stroke:0.18px #fd6717;left:39.52px;transform:scaleX(1.2295);transform-origin:left center"><span>Thương mại/hàng hóa</span></div>
<div id="t3" style="position:absolute;top:159px;line-height:20px;font-size:12.1px;color:#1b1b1b;white-space:nowrap;font-family:'Liberation Sans', sans-serif;-webkit-text-stroke:0.18px #1b1b1b;left:39.10px;transform:scaleX(1.2617);transform-origin:left center"><span>Khách hàng</span></div>
<div id="t4" style="position:absolute;top:192px;line-height:20px;font-size:12.1px;color:#1b1b1b;white-space:nowrap;font-family:'Liberation Sans', sans-serif;-webkit-text-stroke:0.18px #1b1b1b;left:38.58px;transform:scaleX(1.2445);transform-origin:left center"><span>Quản lý đơn hàng</span></div>
<div id="t5" style="position:absolute;top:226px;line-height:20px;font-size:12.1px;color:#1b1b1b;white-space:nowrap;font-family:'Liberation Sans', sans-serif;-webkit-text-stroke:0.18px #1b1b1b;left:39.13px;transform:scaleX(1.2586);transform-origin:left center"><span>Nhà cung cấp</span></div>
<div id="t6" style="position:absolute;top:260px;line-height:20px;font-size:12.1px;color:#1b1b1b;white-space:nowrap;font-family:'Liberation Sans', sans-serif;-webkit-text-stroke:0.18px #1b1b1b;left:38.65px;transform:scaleX(1.2653);transform-origin:left center"><span>Cung ứng/mua hàng</span></div>
<div id="t7" style="position:absolute;top:294px;line-height:20px;font-size:12.1px;color:#1b1b1b;white-space:nowrap;font-family:'Liberation Sans', sans-serif;-webkit-text-stroke:0.18px #1b1b1b;left:39.10px;transform:scaleX(1.2725);transform-origin:left center"><span>Kho hàng</span></div>
<div id="t8" style="position:absolute;top:328px;line-height:20px;font-size:12.1px;color:#1b1b1b;white-space:nowrap;font-family:'Liberation Sans', sans-serif;-webkit-text-stroke:0.18px #1b1b1b;left:39.30px;transform:scaleX(1.1851);transform-origin:left center"><span>Nhân sự</span></div>
<div id="t9" style="position:absolute;top:362px;line-height:20px;font-size:12.1px;color:#1b1b1b;white-space:nowrap;font-family:'Liberation Sans', sans-serif;-webkit-text-stroke:0.18px #1b1b1b;left:39.14px;transform:scaleX(1.2546);transform-origin:left center"><span>Kế toán</span></div>
<div id="t10" style="position:absolute;top:839px;line-height:20px;font-size:12.1px;color:#1b1b1b;white-space:nowrap;font-family:'Liberation Sans', sans-serif;-webkit-text-stroke:0.18px #1b1b1b;left:39.92px;transform:scaleX(1.2301);transform-origin:left center"><span>Thương mại/hàng hóa</span></div>
<div id="t11" style="position:absolute;top:873px;line-height:20px;font-size:12.1px;color:#1b1b1b;white-space:nowrap;font-family:'Liberation Sans', sans-serif;-webkit-text-stroke:0.18px #1b1b1b;left:39.07px;transform:scaleX(1.2972);transform-origin:left center"><span>Hệ thống</span></div>
<div id="t12" style="position:absolute;top:907px;line-height:20px;font-size:12.1px;color:#1b1b1b;white-space:nowrap;font-family:'Liberation Sans', sans-serif;-webkit-text-stroke:0.18px #1b1b1b;left:39.91px;transform:scaleX(1.2401);transform-origin:left center"><span>Trợ giúp</span></div>
<div id="t13" style="position:absolute;top:15px;line-height:19px;font-size:13.1px;color:#5a5f69;white-space:nowrap;font-family:'Liberation Sans', sans-serif;left:1292.69px;transform:scaleX(1.1920);transform-origin:left center"><span>Tài khoản của Quý khách còn <b style="color:#222">61 ngày</b> để sử dụng.</span></div>
<div id="t14" style="position:absolute;top:33px;line-height:19px;font-size:13.1px;color:#5a5f69;white-space:nowrap;font-family:'Liberation Sans', sans-serif;font-style:italic;left:1292.12px;transform:scaleX(1.2107);transform-origin:left center"><span>Cảm ơn Quý khách đã sử dụng dịch vụ của <span style="color:#f97316">Tradefast.Vn</span></span></div>
<div id="t15" style="position:absolute;top:22px;line-height:21px;font-size:15px;color:#2a2a33;white-space:nowrap;font-family:'Liberation Sans', sans-serif;left:1819.67px;transform:scaleX(1.1239);transform-origin:left center"><span>ADMIN</span></div>
<div id="t16" style="position:absolute;top:84px;line-height:27px;font-size:18.6px;color:#1e2433;white-space:nowrap;font-family:'Liberation Sans', sans-serif;-webkit-text-stroke:0.15px #1e2433;left:240.74px;transform:scaleX(1.3192);transform-origin:left center"><span>Tổng quan</span></div>
<div id="t17" style="position:absolute;top:125px;line-height:20px;font-size:12.4px;color:#161616;white-space:nowrap;font-family:'Liberation Sans', sans-serif;-webkit-text-stroke:0.18px #161616;left:240.97px;transform:scaleX(1.2046);transform-origin:left center"><span>Vận hành</span></div>
<div id="t18" style="position:absolute;top:125px;line-height:20px;font-size:12.4px;color:#fd6717;white-space:nowrap;font-family:'Liberation Sans', sans-serif;-webkit-text-stroke:0.18px #fd6717;left:324.77px;transform:scaleX(1.2267);transform-origin:left center"><span>Thống kê</span></div>
<div id="t19" style="position:absolute;top:89px;line-height:21px;font-size:12.9px;color:#464f72;white-space:nowrap;font-family:'Liberation Sans', sans-serif;left:1282.36px;transform:scaleX(1.0509);transform-origin:left center"><span>002 XẺO QUÝT</span></div>
<div id="t20" style="position:absolute;top:89px;line-height:21px;font-size:13.1px;color:#15151c;white-space:nowrap;font-family:'Liberation Sans', sans-serif;-webkit-text-stroke:0.4px #15151c;left:1450.38px;transform:scaleX(1.0536);transform-origin:left center"><span>Tháng 12, 2025</span></div>
<div id="t21" style="position:absolute;top:89px;line-height:21px;font-size:13.1px;color:#fff;white-space:nowrap;font-family:'Liberation Sans', sans-serif;-webkit-text-stroke:0.2px #fff;left:1324.39px;width:600px;text-align:center;transform:scaleX(1.1339);transform-origin:center center"><span>Ngày</span></div>
<div id="t22" style="position:absolute;top:89px;line-height:21px;font-size:13.1px;color:#fff;white-space:nowrap;font-family:'Liberation Sans', sans-serif;-webkit-text-stroke:0.2px #fff;left:1383.88px;width:600px;text-align:center;transform:scaleX(1.1530);transform-origin:center center"><span>Tuần</span></div>
<div id="t23" style="position:absolute;top:89px;line-height:21px;font-size:13.1px;color:#fff;white-space:nowrap;font-family:'Liberation Sans', sans-serif;-webkit-text-stroke:0.2px #fff;left:1445.25px;width:600px;text-align:center;transform:scaleX(1.1448);transform-origin:center center"><span>Tháng</span></div>
<div id="t24" style="position:absolute;top:89px;line-height:21px;font-size:13.1px;color:#fff;white-space:nowrap;font-family:'Liberation Sans', sans-serif;-webkit-text-stroke:0.2px #fff;left:1507.18px;width:600px;text-align:center;transform:scaleX(1.2193);transform-origin:center center"><span>Năm</span></div>
<div id="t25" style="position:absolute;top:180px;line-height:21px;font-size:11.7px;color:#1b1b1b;white-space:nowrap;font-family:'Liberation Sans', sans-serif;-webkit-text-stroke:0.18px #1b1b1b;left:257.19px;transform:scaleX(1.3243);transform-origin:left center"><span>Tổng doanh thu</span></div>
<div id="t26" style="position:absolute;top:180px;line-height:21px;font-size:13.6px;color:#fd6717;white-space:nowrap;font-family:'Liberation Sans', sans-serif;-webkit-text-stroke:0.1px #fd6717;right:1311.77px;transform:scaleX(1.1363);transform-origin:right center"><span>52.529.000</span></div>
<div id="t27" style="position:absolute;top:228px;line-height:21px;font-size:11.7px;color:#1b1b1b;white-space:nowrap;font-family:'Liberation Sans', sans-serif;-webkit-text-stroke:0.18px #1b1b1b;left:256.82px;transform:scaleX(1.3292);transform-origin:left center"><span>Doanh thu dịch vụ</span></div>
<div id="t28" style="position:absolute;top:228px;line-height:21px;font-size:13.6px;color:#1cc896;white-space:nowrap;font-family:'Liberation Sans', sans-serif;-webkit-text-stroke:0.1px #1cc896;right:1312.51px;transform:scaleX(1.3338);transform-origin:right center"><span>0</span></div>
<div id="t29" style="position:absolute;top:257px;line-height:21px;font-size:11.7px;color:#1b1b1b;white-space:nowrap;font-family:'Liberation Sans', sans-serif;-webkit-text-stroke:0.18px #1b1b1b;left:256.80px;transform:scaleX(1.3161);transform-origin:left center"><span>Doanh thu sản phẩm</span></div>
<div id="t30" style="position:absolute;top:257px;line-height:21px;font-size:13.6px;color:#f5283f;white-space:nowrap;font-family:'Liberation Sans', sans-serif;-webkit-text-stroke:0.1px #f5283f;right:1311.76px;transform:scaleX(1.1285);transform-origin:right center"><span>52.529.000</span></div>
<div id="t31" style="position:absolute;top:287px;line-height:21px;font-size:11.7px;color:#1b1b1b;white-space:nowrap;font-family:'Liberation Sans', sans-serif;-webkit-text-stroke:0.18px #1b1b1b;left:257.25px;transform:scaleX(1.2383);transform-origin:left center"><span>Thu nợ/COD</span></div>
<div id="t32" style="position:absolute;top:287px;line-height:21px;font-size:13.6px;color:#1aa3f0;white-space:nowrap;font-family:'Liberation Sans', sans-serif;-webkit-text-stroke:0.1px #1aa3f0;right:1312.79px;transform:scaleX(1.3452);transform-origin:right center"><span>0</span></div>
<div id="t33" style="position:absolute;top:316px;line-height:21px;font-size:11.7px;color:#1b1b1b;white-space:nowrap;font-family:'Liberation Sans', sans-serif;-webkit-text-stroke:0.18px #1b1b1b;left:257.19px;transform:scaleX(1.2935);transform-origin:left center"><span>Thu khác</span></div>
<div id="t34" style="position:absolute;top:316px;line-height:21px;font-size:13.6px;color:#f55a1e;white-space:nowrap;font-family:'Liberation Sans', sans-serif;-webkit-text-stroke:0.1px #f55a1e;right:1312.82px;transform:scaleX(1.3237);transform-origin:right center"><span>0</span></div>
<div id="t35" style="position:absolute;top:180px;line-height:21px;font-size:11.7px;color:#1b1b1b;white-space:nowrap;font-family:'Liberation Sans', sans-serif;-webkit-text-stroke:0.18px #1b1b1b;left:660.12px;transform:scaleX(1.3042);transform-origin:left center"><span>Phương thức thanh toán</span></div>
<div id="t36" style="position:absolute;top:228px;line-height:21px;font-size:11.7px;color:#1b1b1b;white-space:nowrap;font-family:'Liberation Sans', sans-serif;-webkit-text-stroke:0.18px #1b1b1b;left:661.18px;transform:scaleX(1.3102);transform-origin:left center"><span>Tiền mặt</span></div>
<div id="t37" style="position:absolute;top:228px;line-height:21px;font-size:13.6px;color:#1cc896;white-space:nowrap;font-family:'Liberation Sans', sans-serif;-webkit-text-stroke:0.1px #1cc896;right:1006.79px;transform:scaleX(1.2053);transform-origin:right center"><span>36</span></div>
<div id="t38" style="position:absolute;top:228px;line-height:21px;font-size:13.6px;color:#1cc896;white-space:nowrap;font-family:'Liberation Sans', sans-serif;-webkit-text-stroke:0.1px #1cc896;right:908.69px;transform:scaleX(1.1562);transform-origin:right center"><span>50.907.000</span></div>
<div id="t39" style="position:absolute;top:257px;line-height:21px;font-size:11.7px;color:#1b1b1b;white-space:nowrap;font-family:'Liberation Sans', sans-serif;-webkit-text-stroke:0.18px #1b1b1b;left:660.71px;transform:scaleX(1.3105);transform-origin:left center"><span>Chuyển khoản</span></div>
<div id="t40" style="position:absolute;top:257px;line-height:21px;font-size:13.6px;color:#f5283f;white-space:nowrap;font-family:'Liberation Sans', sans-serif;-webkit-text-stroke:0.1px #f5283f;right:995.60px"><span>1</span></div>
<div id="t41" style="position:absolute;top:257px;line-height:21px;font-size:13.6px;color:#f5283f;white-space:nowrap;font-family:'Liberation Sans', sans-serif;-webkit-text-stroke:0.1px #f5283f;right:908.04px;transform:scaleX(1.1049);transform-origin:right center"><span>1.622.000</span></div>
<div id="t42" style="position:absolute;top:287px;line-height:21px;font-size:11.7px;color:#1b1b1b;white-space:nowrap;font-family:'Liberation Sans', sans-serif;-webkit-text-stroke:0.18px #1b1b1b;left:661.18px;transform:scaleX(1.3125);transform-origin:left center"><span>Thẻ tín dụng</span></div>
<div id="t43" style="position:absolute;top:287px;line-height:21px;font-size:13.6px;color:#1aa3f0;white-space:nowrap;font-family:'Liberation Sans', sans-serif;-webkit-text-stroke:0.1px #1aa3f0;right:938.29px;transform:scaleX(1.3452);transform-origin:right center"><span>0</span></div>
<div id="t44" style="position:absolute;top:287px;line-height:21px;font-size:13.6px;color:#1aa3f0;white-space:nowrap;font-family:'Liberation Sans', sans-serif;-webkit-text-stroke:0.1px #1aa3f0;right:908.79px;transform:scaleX(1.3452);transform-origin:right center"><span>0</span></div>
<div id="t45" style="position:absolute;top:316px;line-height:21px;font-size:11.7px;color:#1b1b1b;white-space:nowrap;font-family:'Liberation Sans', sans-serif;-webkit-text-stroke:0.18px #1b1b1b;left:660.64px;transform:scaleX(1.2328);transform-origin:left center"><span>COD</span></div>
<div id="t46" style="position:absolute;top:316px;line-height:21px;font-size:13.6px;color:#f55a1e;white-space:nowrap;font-family:'Liberation Sans', sans-serif;-webkit-text-stroke:0.1px #f55a1e;right:938.32px;transform:scaleX(1.3237);transform-origin:right center"><span>0</span></div>
<div id="t47" style="position:absolute;top:316px;line-height:21px;font-size:13.6px;color:#f55a1e;white-space:nowrap;font-family:'Liberation Sans', sans-serif;-webkit-text-stroke:0.1px #f55a1e;right:908.15px;transform:scaleX(1.3237);transform-origin:right center"><span>0</span></div>
<div id="t48" style="position:absolute;top:180px;line-height:21px;font-size:11.7px;color:#1b1b1b;white-space:nowrap;font-family:'Liberation Sans', sans-serif;-webkit-text-stroke:0.18px #1b1b1b;left:1063.63px;transform:scaleX(1.3024);transform-origin:left center"><span>Doanh thu ước tính</span></div>
<div id="t49" style="position:absolute;top:180px;line-height:21px;font-size:13.6px;color:#fd6717;white-space:nowrap;font-family:'Liberation Sans', sans-serif;-webkit-text-stroke:0.1px #fd6717;right:504.60px;transform:scaleX(1.1363);transform-origin:right center"><span>52.529.000</span></div>
<div id="t50" style="position:absolute;top:228px;line-height:21px;font-size:11.7px;color:#1b1b1b;white-space:nowrap;font-family:'Liberation Sans', sans-serif;-webkit-text-stroke:0.18px #1b1b1b;left:1065.11px;transform:scaleX(1.2964);transform-origin:left center"><span>Đơn hàng hoàn tất</span></div>
<div id="t51" style="position:absolute;top:228px;line-height:21px;font-size:13.6px;color:#1cc896;white-space:nowrap;font-family:'Liberation Sans', sans-serif;-webkit-text-stroke:0.1px #1cc896;right:602.17px;transform:scaleX(1.2693);transform-origin:right center"><span>30</span></div>
<div id="t52" style="position:absolute;top:228px;line-height:21px;font-size:13.6px;color:#1cc896;white-space:nowrap;font-family:'Liberation Sans', sans-serif;-webkit-text-stroke:0.1px #1cc896;right:505.09px;transform:scaleX(1.1359);transform-origin:right center"><span>52.258.000</span></div>
<div id="t53" style="position:absolute;top:257px;line-height:21px;font-size:11.7px;color:#1b1b1b;white-space:nowrap;font-family:'Liberation Sans', sans-serif;-webkit-text-stroke:0.18px #1b1b1b;left:1065.13px;transform:scaleX(1.2704);transform-origin:left center"><span>Đơn hàng đang xử lý</span></div>
<div id="t54" style="position:absolute;top:257px;line-height:21px;font-size:13.6px;color:#f5283f;white-space:nowrap;font-family:'Liberation Sans', sans-serif;-webkit-text-stroke:0.1px #f5283f;right:534.88px;transform:scaleX(1.3210);transform-origin:right center"><span>0</span></div>
<div id="t55" style="position:absolute;top:257px;line-height:21px;font-size:13.6px;color:#f5283f;white-space:nowrap;font-family:'Liberation Sans', sans-serif;-webkit-text-stroke:0.1px #f5283f;right:504.38px;transform:scaleX(1.3210);transform-origin:right center"><span>0</span></div>
<div id="t56" style="position:absolute;top:287px;line-height:21px;font-size:11.7px;color:#1b1b1b;white-space:nowrap;font-family:'Liberation Sans', sans-serif;-webkit-text-stroke:0.18px #1b1b1b;left:1065.11px;transform:scaleX(1.3116);transform-origin:left center"><span>Đơn hủy/thất bại</span></div>
<div id="t57" style="position:absolute;top:287px;line-height:21px;font-size:13.6px;color:#1aa3f0;white-space:nowrap;font-family:'Liberation Sans', sans-serif;-webkit-text-stroke:0.1px #1aa3f0;right:578.61px;transform:scaleX(1.2286);transform-origin:right center"><span>7</span></div>
<div id="t58" style="position:absolute;top:287px;line-height:21px;font-size:13.6px;color:#1aa3f0;white-space:nowrap;font-family:'Liberation Sans', sans-serif;-webkit-text-stroke:0.1px #1aa3f0;right:505.05px;transform:scaleX(1.0961);transform-origin:right center"><span>271.000</span></div>
<div id="t59" style="position:absolute;top:352px;line-height:21px;font-size:11.7px;color:#1b1b1b;white-space:nowrap;font-family:'Liberation Sans', sans-serif;-webkit-text-stroke:0.18px #1b1b1b;left:1064.13px;transform:scaleX(1.3183);transform-origin:left center"><span>Giá trị trung bình đơn</span></div>
<div id="t60" style="position:absolute;top:352px;line-height:21px;font-size:13.6px;color:#fd6717;white-space:nowrap;font-family:'Liberation Sans', sans-serif;-webkit-text-stroke:0.1px #fd6717;right:504.87px;transform:scaleX(1.0247);transform-origin:right center"><span>1.419.703</span></div>
<div id="t61" style="position:absolute;top:180px;line-height:21px;font-size:11.7px;color:#1b1b1b;white-space:nowrap;font-family:'Liberation Sans', sans-serif;-webkit-text-stroke:0.18px #1b1b1b;left:1467.66px;transform:scaleX(1.2971);transform-origin:left center"><span>Phương thức mua hàng</span></div>
<div id="t62" style="position:absolute;top:228px;line-height:21px;font-size:11.7px;color:#1b1b1b;white-space:nowrap;font-family:'Liberation Sans', sans-serif;-webkit-text-stroke:0.18px #1b1b1b;left:1469.07px;transform:scaleX(1.2534);transform-origin:left center"><span>Tại cửa hàng</span></div>
<div id="t63" style="position:absolute;top:228px;line-height:21px;font-size:13.6px;color:#1cc896;white-space:nowrap;font-family:'Liberation Sans', sans-serif;-webkit-text-stroke:0.1px #1cc896;right:197.63px;transform:scaleX(1.1621);transform-origin:right center"><span>37</span></div>
<div id="t64" style="position:absolute;top:228px;line-height:21px;font-size:13.6px;color:#1cc896;white-space:nowrap;font-family:'Liberation Sans', sans-serif;-webkit-text-stroke:0.1px #1cc896;right:101.03px;transform:scaleX(1.1317);transform-origin:right center"><span>52.529.000</span></div>
<div id="t65" style="position:absolute;top:257px;line-height:21px;font-size:11.7px;color:#1b1b1b;white-space:nowrap;font-family:'Liberation Sans', sans-serif;-webkit-text-stroke:0.18px #1b1b1b;left:1469.11px;transform:scaleX(1.3078);transform-origin:left center"><span>Đặt trực tiếp - giao hàng</span></div>
<div id="t66" style="position:absolute;top:257px;line-height:21px;font-size:13.6px;color:#f5283f;white-space:nowrap;font-family:'Liberation Sans', sans-serif;-webkit-text-stroke:0.1px #f5283f;right:130.88px;transform:scaleX(1.3210);transform-origin:right center"><span>0</span></div>
<div id="t67" style="position:absolute;top:257px;line-height:21px;font-size:13.6px;color:#f5283f;white-space:nowrap;font-family:'Liberation Sans', sans-serif;-webkit-text-stroke:0.1px #f5283f;right:100.38px;transform:scaleX(1.3210);transform-origin:right center"><span>0</span></div>
<div id="t68" style="position:absolute;top:287px;line-height:21px;font-size:11.7px;color:#1b1b1b;white-space:nowrap;font-family:'Liberation Sans', sans-serif;-webkit-text-stroke:0.18px #1b1b1b;left:1469.11px;transform:scaleX(1.3033);transform-origin:left center"><span>Đặt qua kênh online -</span></div>
<div id="t69" style="position:absolute;top:306px;line-height:21px;font-size:11.7px;color:#1b1b1b;white-space:nowrap;font-family:'Liberation Sans', sans-serif;-webkit-text-stroke:0.18px #1b1b1b;left:1468.35px;transform:scaleX(1.3338);transform-origin:left center"><span>giao hàng</span></div>
<div id="t70" style="position:absolute;top:296px;line-height:21px;font-size:13.6px;color:#f55a1e;white-space:nowrap;font-family:'Liberation Sans', sans-serif;-webkit-text-stroke:0.1px #f55a1e;right:130.82px;transform:scaleX(1.3237);transform-origin:right center"><span>0</span></div>
<div id="t71" style="position:absolute;top:296px;line-height:21px;font-size:13.6px;color:#1aa3f0;white-space:nowrap;font-family:'Liberation Sans', sans-serif;-webkit-text-stroke:0.1px #1aa3f0;right:100.63px;transform:scaleX(1.3452);transform-origin:right center"><span>0</span></div>
<div id="t72" style="position:absolute;top:352px;line-height:21px;font-size:11.7px;color:#1b1b1b;white-space:nowrap;font-family:'Liberation Sans', sans-serif;-webkit-text-stroke:0.18px #1b1b1b;left:1467.73px;transform:scaleX(1.3118);transform-origin:left center"><span>Khách mới</span></div>
<div id="t73" style="position:absolute;top:352px;line-height:21px;font-size:13.6px;color:#fd6717;white-space:nowrap;font-family:'Liberation Sans', sans-serif;-webkit-text-stroke:0.1px #fd6717;left:1260.51px;width:600px;text-align:center;transform:scaleX(1.3543);transform-origin:center center"><span>0</span></div>
<div id="t74" style="position:absolute;top:352px;line-height:21px;font-size:11.7px;color:#1b1b1b;white-space:nowrap;font-family:'Liberation Sans', sans-serif;-webkit-text-stroke:0.18px #1b1b1b;left:1696.58px;transform:scaleX(1.2987);transform-origin:left center"><span>Khách quay lại</span></div>
<div id="t75" style="position:absolute;top:352px;line-height:21px;font-size:13.6px;color:#fd6717;white-space:nowrap;font-family:'Liberation Sans', sans-serif;-webkit-text-stroke:0.1px #fd6717;left:1514.18px;width:600px;text-align:center;transform:scaleX(1.3279);transform-origin:center center"><span>2</span></div>
<div id="t76" style="position:absolute;top:420px;line-height:21px;font-size:11.7px;color:#1b1b1b;white-space:nowrap;font-family:'Liberation Sans', sans-serif;-webkit-text-stroke:0.18px #1b1b1b;left:256.18px;transform:scaleX(1.2954);transform-origin:left center"><span>Cơ cấu bán hàng theo danh mục</span></div>
<div id="t77" style="position:absolute;top:420px;line-height:21px;font-size:11.7px;color:#1b1b1b;white-space:nowrap;font-family:'Liberation Sans', sans-serif;-webkit-text-stroke:0.18px #1b1b1b;left:660.10px;transform:scaleX(1.3029);transform-origin:left center"><span>Doanh thu theo ngày &amp; phương thức thanh toán</span></div>
<div id="t78" style="position:absolute;top:736px;line-height:21px;font-size:11.7px;color:#1b1b1b;white-space:nowrap;font-family:'Liberation Sans', sans-serif;-webkit-text-stroke:0.18px #1b1b1b;left:257.02px;transform:scaleX(1.3194);transform-origin:left center"><span>Tỷ trọng đơn hàng theo trạng thái</span></div>
<div id="t79" style="position:absolute;top:736px;line-height:21px;font-size:11.7px;color:#1b1b1b;white-space:nowrap;font-family:'Liberation Sans', sans-serif;-webkit-text-stroke:0.18px #1b1b1b;left:660.09px;transform:scaleX(1.3234);transform-origin:left center"><span>Biểu đồ đơn hàng/ doanh thu/treo tồn theo phụ trách</span></div>
<div id="t80" style="position:absolute;top:475px;line-height:18px;font-size:12.2px;color:#3a3a3a;white-space:nowrap;font-family:'Liberation Sans', sans-serif;left:450.34px;transform:scaleX(1.1758);transform-origin:left center"><span><b style="color:#111">37%</b> Thuốc trừ sâu</span></div>
<div id="t81" style="position:absolute;top:494px;line-height:18px;font-size:12.2px;color:#3a3a3a;white-space:nowrap;font-family:'Liberation Sans', sans-serif;left:450.17px;transform:scaleX(1.1779);transform-origin:left center"><span><b style="color:#111">16%</b> Phân bón</span></div>
<div id="t82" style="position:absolute;top:513px;line-height:18px;font-size:12.2px;color:#3a3a3a;white-space:nowrap;font-family:'Liberation Sans', sans-serif;left:451.17px;transform:scaleX(1.1485);transform-origin:left center"><span><b style="color:#111">4%</b> Thuốc xử lí hạt giố...</span></div>
<div id="t83" style="position:absolute;top:533px;line-height:18px;font-size:12.2px;color:#3a3a3a;white-space:nowrap;font-family:'Liberation Sans', sans-serif;left:450.60px;transform:scaleX(1.1906);transform-origin:left center"><span><b style="color:#111">25%</b> Thuốc trừ bệnh</span></div>
<div id="t84" style="position:absolute;top:552px;line-height:18px;font-size:12.2px;color:#3a3a3a;white-space:nowrap;font-family:'Liberation Sans', sans-serif;left:450.34px;transform:scaleX(1.1780);transform-origin:left center"><span><b style="color:#111">5%</b> Thuốc dưỡng</span></div>
<div id="t85" style="position:absolute;top:572px;line-height:18px;font-size:12.2px;color:#3a3a3a;white-space:nowrap;font-family:'Liberation Sans', sans-serif;left:450.80px;transform:scaleX(1.1881);transform-origin:left center"><span><b style="color:#111">0%</b> Thuốc hỗ trợ</span></div>
<div id="t86" style="position:absolute;top:591px;line-height:18px;font-size:12.2px;color:#3a3a3a;white-space:nowrap;font-family:'Liberation Sans', sans-serif;left:450.43px;transform:scaleX(1.1646);transform-origin:left center"><span><b style="color:#111">7%</b> Thuốc kích thích s...</span></div>
<div id="t87" style="position:absolute;top:610px;line-height:18px;font-size:12.2px;color:#3a3a3a;white-space:nowrap;font-family:'Liberation Sans', sans-serif;left:451.31px;transform:scaleX(1.1657);transform-origin:left center"><span><b style="color:#111">0%</b> Thuốc điều hoà si...</span></div>
<div id="t88" style="position:absolute;top:630px;line-height:18px;font-size:12.2px;color:#3a3a3a;white-space:nowrap;font-family:'Liberation Sans', sans-serif;left:451.47px;transform:scaleX(1.1774);transform-origin:left center"><span><b style="color:#111">4%</b> Thuốc trừ cỏ</span></div>
<div id="t89" style="position:absolute;top:790px;line-height:20px;font-size:12.0px;color:#111;white-space:nowrap;font-family:'Liberation Sans', sans-serif;-webkit-text-stroke:0.2px #111;left:451.16px;transform:scaleX(1.2292);transform-origin:left center"><span><b>0%</b> Khách mới</span></div>
<div id="t90" style="position:absolute;top:809px;line-height:16px;font-size:11.6px;color:#f2232f;white-space:nowrap;font-family:'Liberation Sans', sans-serif;left:436.39px;transform:scaleX(1.1199);transform-origin:left center"><span>0  |  0</span></div>
<div id="t91" style="position:absolute;top:826px;line-height:20px;font-size:12.0px;color:#111;white-space:nowrap;font-family:'Liberation Sans', sans-serif;-webkit-text-stroke:0.2px #111;left:450.71px;transform:scaleX(1.2112);transform-origin:left center"><span><b>100%</b> Khách quay lại</span></div>
<div id="t92" style="position:absolute;top:847px;line-height:16px;font-size:11.6px;color:#f78a84;white-space:nowrap;font-family:'Liberation Sans', sans-serif;left:436.23px;transform:scaleX(1.0730);transform-origin:left center"><span>37  |  52.529.000</span></div>
<div id="t93" style="position:absolute;top:656px;line-height:13px;font-size:10.3px;color:#4a4a4a;white-space:nowrap;font-family:'Liberation Sans', sans-serif;left:418.50px;width:600px;text-align:center"><span>01</span></div>
<div id="t94" style="position:absolute;top:656px;line-height:13px;font-size:10.3px;color:#4a4a4a;white-space:nowrap;font-family:'Liberation Sans', sans-serif;left:454.50px;width:600px;text-align:center"><span>02</span></div>
<div id="t95" style="position:absolute;top:656px;line-height:13px;font-size:10.3px;color:#4a4a4a;white-space:nowrap;font-family:'Liberation Sans', sans-serif;left:490.50px;width:600px;text-align:center"><span>03</span></div>
<div id="t96" style="position:absolute;top:656px;line-height:13px;font-size:10.3px;color:#4a4a4a;white-space:nowrap;font-family:'Liberation Sans', sans-serif;left:526.50px;width:600px;text-align:center"><span>04</span></div>
<div id="t97" style="position:absolute;top:656px;line-height:13px;font-size:10.3px;color:#4a4a4a;white-space:nowrap;font-family:'Liberation Sans', sans-serif;left:562.50px;width:600px;text-align:center"><span>05</span></div>
<div id="t98" style="position:absolute;top:656px;line-height:13px;font-size:10.3px;color:#4a4a4a;white-space:nowrap;font-family:'Liberation Sans', sans-serif;left:598.50px;width:600px;text-align:center"><span>06</span></div>
<div id="t99" style="position:absolute;top:656px;line-height:13px;font-size:10.3px;color:#4a4a4a;white-space:nowrap;font-family:'Liberation Sans', sans-serif;left:634.50px;width:600px;text-align:center"><span>07</span></div>
<div id="t100" style="position:absolute;top:656px;line-height:13px;font-size:10.3px;color:#4a4a4a;white-space:nowrap;font-family:'Liberation Sans', sans-serif;left:670.50px;width:600px;text-align:center"><span>08</span></div>
<div id="t101" style="position:absolute;top:656px;line-height:13px;font-size:10.3px;color:#4a4a4a;white-space:nowrap;font-family:'Liberation Sans', sans-serif;left:706.50px;width:600px;text-align:center"><span>09</span></div>
<div id="t102" style="position:absolute;top:656px;line-height:13px;font-size:10.3px;color:#4a4a4a;white-space:nowrap;font-family:'Liberation Sans', sans-serif;left:742.50px;width:600px;text-align:center"><span>10</span></div>
<div id="t103" style="position:absolute;top:656px;line-height:13px;font-size:10.3px;color:#4a4a4a;white-space:nowrap;font-family:'Liberation Sans', sans-serif;left:778.50px;width:600px;text-align:center"><span>11</span></div>
<div id="t104" style="position:absolute;top:656px;line-height:13px;font-size:10.3px;color:#4a4a4a;white-space:nowrap;font-family:'Liberation Sans', sans-serif;left:814.50px;width:600px;text-align:center"><span>12</span></div>
<div id="t105" style="position:absolute;top:656px;line-height:13px;font-size:10.3px;color:#4a4a4a;white-space:nowrap;font-family:'Liberation Sans', sans-serif;left:850.50px;width:600px;text-align:center"><span>13</span></div>
<div id="t106" style="position:absolute;top:656px;line-height:13px;font-size:10.3px;color:#4a4a4a;white-space:nowrap;font-family:'Liberation Sans', sans-serif;left:886.50px;width:600px;text-align:center"><span>14</span></div>
<div id="t107" style="position:absolute;top:656px;line-height:13px;font-size:10.3px;color:#4a4a4a;white-space:nowrap;font-family:'Liberation Sans', sans-serif;left:922.50px;width:600px;text-align:center"><span>15</span></div>
<div id="t108" style="position:absolute;top:656px;line-height:13px;font-size:10.3px;color:#4a4a4a;white-space:nowrap;font-family:'Liberation Sans', sans-serif;left:958.50px;width:600px;text-align:center"><span>16</span></div>
<div id="t109" style="position:absolute;top:656px;line-height:13px;font-size:10.3px;color:#4a4a4a;white-space:nowrap;font-family:'Liberation Sans', sans-serif;left:994.50px;width:600px;text-align:center"><span>17</span></div>
<div id="t110" style="position:absolute;top:656px;line-height:13px;font-size:10.3px;color:#4a4a4a;white-space:nowrap;font-family:'Liberation Sans', sans-serif;left:1030.50px;width:600px;text-align:center"><span>18</span></div>
<div id="t111" style="position:absolute;top:656px;line-height:13px;font-size:10.3px;color:#4a4a4a;white-space:nowrap;font-family:'Liberation Sans', sans-serif;left:1066.50px;width:600px;text-align:center"><span>19</span></div>
<div id="t112" style="position:absolute;top:656px;line-height:13px;font-size:10.3px;color:#4a4a4a;white-space:nowrap;font-family:'Liberation Sans', sans-serif;left:1102.50px;width:600px;text-align:center"><span>20</span></div>
<div id="t113" style="position:absolute;top:656px;line-height:13px;font-size:10.3px;color:#4a4a4a;white-space:nowrap;font-family:'Liberation Sans', sans-serif;left:1138.50px;width:600px;text-align:center"><span>21</span></div>
<div id="t114" style="position:absolute;top:656px;line-height:13px;font-size:10.3px;color:#4a4a4a;white-space:nowrap;font-family:'Liberation Sans', sans-serif;left:1174.50px;width:600px;text-align:center"><span>22</span></div>
<div id="t115" style="position:absolute;top:656px;line-height:13px;font-size:10.3px;color:#4a4a4a;white-space:nowrap;font-family:'Liberation Sans', sans-serif;left:1210.50px;width:600px;text-align:center"><span>23</span></div>
<div id="t116" style="position:absolute;top:656px;line-height:13px;font-size:10.3px;color:#4a4a4a;white-space:nowrap;font-family:'Liberation Sans', sans-serif;left:1246.50px;width:600px;text-align:center"><span>24</span></div>
<div id="t117" style="position:absolute;top:656px;line-height:13px;font-size:10.3px;color:#4a4a4a;white-space:nowrap;font-family:'Liberation Sans', sans-serif;left:1282.50px;width:600px;text-align:center"><span>25</span></div>
<div id="t118" style="position:absolute;top:656px;line-height:13px;font-size:10.3px;color:#4a4a4a;white-space:nowrap;font-family:'Liberation Sans', sans-serif;left:1318.50px;width:600px;text-align:center"><span>26</span></div>
<div id="t119" style="position:absolute;top:656px;line-height:13px;font-size:10.3px;color:#4a4a4a;white-space:nowrap;font-family:'Liberation Sans', sans-serif;left:1354.50px;width:600px;text-align:center"><span>27</span></div>
<div id="t120" style="position:absolute;top:656px;line-height:13px;font-size:10.3px;color:#4a4a4a;white-space:nowrap;font-family:'Liberation Sans', sans-serif;left:1390.50px;width:600px;text-align:center"><span>28</span></div>
<div id="t121" style="position:absolute;top:656px;line-height:13px;font-size:10.3px;color:#4a4a4a;white-space:nowrap;font-family:'Liberation Sans', sans-serif;left:1426.50px;width:600px;text-align:center"><span>29</span></div>
<div id="t122" style="position:absolute;top:656px;line-height:13px;font-size:10.3px;color:#4a4a4a;white-space:nowrap;font-family:'Liberation Sans', sans-serif;left:1462.50px;width:600px;text-align:center"><span>30</span></div>
<div id="t123" style="position:absolute;top:656px;line-height:13px;font-size:10.3px;color:#4a4a4a;white-space:nowrap;font-family:'Liberation Sans', sans-serif;left:1498.50px;width:600px;text-align:center"><span>31</span></div>
<div id="t124" style="position:absolute;top:641px;line-height:13px;font-size:10.3px;color:#4a4a4a;white-space:nowrap;font-family:'Liberation Sans', sans-serif;right:1229.40px"><span>0</span></div>
<div id="t125" style="position:absolute;top:607px;line-height:13px;font-size:10.3px;color:#4a4a4a;white-space:nowrap;font-family:'Liberation Sans', sans-serif;right:1229.40px"><span>600k</span></div>
<div id="t126" style="position:absolute;top:574px;line-height:13px;font-size:10.3px;color:#4a4a4a;white-space:nowrap;font-family:'Liberation Sans', sans-serif;right:1229.40px"><span>1.2tr</span></div>
<div id="t127" style="position:absolute;top:541px;line-height:13px;font-size:10.3px;color:#4a4a4a;white-space:nowrap;font-family:'Liberation Sans', sans-serif;right:1229.40px"><span>1.8tr</span></div>
<div id="t128" style="position:absolute;top:508px;line-height:13px;font-size:10.3px;color:#4a4a4a;white-space:nowrap;font-family:'Liberation Sans', sans-serif;right:1229.40px"><span>2.4tr</span></div>
<div id="t129" style="position:absolute;top:474px;line-height:13px;font-size:10.3px;color:#4a4a4a;white-space:nowrap;font-family:'Liberation Sans', sans-serif;right:1229.40px"><span>3tr</span></div>
<div id="t130" style="position:absolute;top:790px;line-height:13px;font-size:10.3px;color:#4a4a4a;white-space:nowrap;font-family:'Liberation Sans', sans-serif;right:1235.00px"><span>55tr</span></div>
<div id="t131" style="position:absolute;top:823px;line-height:13px;font-size:10.3px;color:#4a4a4a;white-space:nowrap;font-family:'Liberation Sans', sans-serif;right:1235.00px"><span>44tr</span></div>
<div id="t132" style="position:absolute;top:856px;line-height:13px;font-size:10.3px;color:#4a4a4a;white-space:nowrap;font-family:'Liberation Sans', sans-serif;right:1235.00px"><span>33tr</span></div>
<div id="t133" style="position:absolute;top:890px;line-height:13px;font-size:10.3px;color:#4a4a4a;white-space:nowrap;font-family:'Liberation Sans', sans-serif;right:1235.00px"><span>22tr</span></div>
<div id="t134" style="position:absolute;top:923px;line-height:13px;font-size:10.3px;color:#4a4a4a;white-space:nowrap;font-family:'Liberation Sans', sans-serif;right:1235.00px"><span>11tr</span></div>
<div id="t135" style="position:absolute;top:20px;line-height:13px;font-size:9.5px;color:#fff3ea;white-space:nowrap;font-family:'Liberation Sans', sans-serif;left:1428.55px;width:600px;text-align:center"><span>0</span></div>

<div class="m" style="left:0;top:0;width:1920px;height:2px"></div>
<div class="m" style="left:0;top:952px;width:1920px;height:2px"></div>
<div class="m" style="left:0;top:0;width:4px;height:954px"></div>
<div class="m" style="left:1916px;top:0;width:4px;height:954px"></div>
<div class="m" style="left:4px;top:2px;width:1px;height:950px;background:rgb(221,221,221)"></div>
<div class="m" style="left:5px;top:2px;width:1px;height:950px;background:rgb(180,180,180)"></div>
<div class="m" style="left:6px;top:2px;width:1px;height:950px;background:rgb(210,210,210)"></div>
<div class="m" style="left:1913px;top:2px;width:1px;height:950px;background:rgb(188,188,188)"></div>
<div class="m" style="left:1914px;top:2px;width:1px;height:950px;background:rgb(180,180,180)"></div>
<div class="m" style="left:1915px;top:2px;width:1px;height:950px;background:rgb(202,202,202)"></div>
<div class="m" style="left:5px;top:2px;width:1910px;height:1px;background:rgb(180,180,180)"></div>
<div class="m" style="left:5px;top:3px;width:1910px;height:1px;background:rgb(180,180,180)"></div>
<div class="m" style="left:7px;top:4px;width:1906px;height:1px;background:rgb(249,249,249)"></div>
<div class="m" style="left:5px;top:950px;width:1910px;height:1px;background:rgb(186,186,186)"></div>
<div class="m" style="left:5px;top:951px;width:1910px;height:1px;background:rgb(191,191,191)"></div>
<div class="m" style="left:7px;top:949px;width:1906px;height:1px;background:rgb(251,251,251)"></div>
</div></body></html>
